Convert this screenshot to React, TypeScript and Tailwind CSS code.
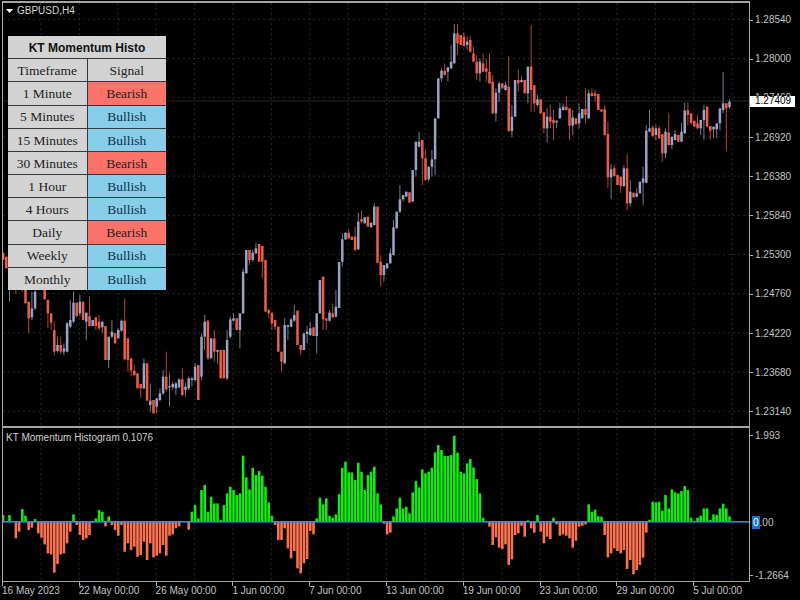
import React from "react";

type Row = number[];
const seg = (base: number, rows: Row[]) =>
  rows.map(([u, t, b, wt, wb]) => ({
    up: u === 1,
    t: base + t / 3,
    b: base + b / 3,
    wt: base + (wt ?? t) / 3,
    wb: base + (wb ?? b) / 3,
  }));

const candles = [
  ...seg(200, [[0,158,180],[0,170,205]]),
  ...seg(280, [
    [1,0,30,-10,65],[1,0,20],[0,0,30,-10,42],[1,0,20],[0,0,25,-10,35],
    [0,20,70],[0,65,115,65,160],[1,85,112,35,120],[1,35,85,30,90],[1,10,30],[0,10,30],
    [0,20,58],[0,60,100,60,145],[0,100,128,100,150],[0,150,215,125,225],[1,195,213,170,218],
    [0,195,215,170,222],[1,205,215,190,225],[1,130,215,125,218],[1,120,140,60,145],[1,68,125,35,130],
    [0,68,108,68,112],[1,65,100,45,110],[0,65,120],[1,98,125,98,180],[0,108,138,50,140],
    [1,120,138],[0,112,138,112,150],[0,125,145,105,150],[1,125,142,125,160],[0,138,240],
    [1,170,240,170,265],[1,155,170,120,175],[0,160,190],[1,150,175,145,175],[1,122,152,118,155],
    [0,122,238,55,242],[0,175,240,175,275],[0,235,272,235,288],[0,272,285,255,290],[0,280,325],
    [0,312,325,312,355],[1,250,325,235,328],[0,250,362],[1,362,375,310,395],[0,360,400],
    [1,355,380,355,400],[1,340,360,325,365],[1,290,340,270,345],[0,290,328,215,335],[1,318,322,280,380],
    [1,312,322,305,330],[1,310,325,305,345],[1,298,322,295,325],[0,298,345,265,348],[1,320,330,310,350],
    [1,295,325,290,330],[1,295,300,290,320],[1,260,300,250,305],[0,255,360],
  ]),
  ...seg(230, [
    [1,320,440,310,450],[1,275,320,255,360],[0,272,385,272,390],[1,325,385],[0,325,365,300,395],
    [1,360,365,360,400],[0,360,445],[0,360,445],[1,330,445,300,450],[1,268,320,260,325],
    [1,265,272,250,275],[0,265,300],[1,250,300,250,355],[1,125,250,115,252],[1,60,130],
    [0,60,90,60,105],[1,68,90,60,95],[1,55,70,40,72],[0,42,95],[0,48,95,48,145],
    [0,90,245],[0,240,250,237,265],[0,248,280,248,300],[0,270,290,270,300],[0,290,365],
    [0,365,395,365,425],[1,285,400,265,402],[1,285,290,285,330],[1,268,290,265,292],[1,255,272,225,275],
    [0,242,345],[0,345,360,345,375],[1,310,360],[1,305,312,288,340],[1,295,315,275,318],
    [0,292,318],[1,250,318,250,370],[1,150,250],[0,140,268,140,300],[0,265,272,265,300],
    [1,248,272,240,275],[0,250,262,220,265],[1,230,260,180,262],
  ]),
  ...seg(20, [
    [1,726,864],[1,658,725,640,740],[1,638,658,638,660],[0,638,655,630,657],[0,650,660],
    [0,650,690,620,695],[1,605,688,578,690],[0,597,605,572,610],[1,592,610],[0,590,620],
    [1,608,622],[1,560,615,550,617],[0,560,728],[0,725,765,705,800],[1,735,765,735,785],
    [1,730,745],[1,700,730,685,732],[1,622,705,600,707],[1,575,625],[1,538,575,495,580],
    [1,525,538,525,545],[1,515,530],[0,517,548],[1,450,545],[1,365,450,365,470],
    [1,365,380,335,382],[0,360,415,360,495],[0,415,480,390,482],[1,440,478,440,485],[1,418,440,390,470],
    [1,295,418,295,465],[1,175,295],[1,152,175,145,185],[0,152,165,130,167],[1,142,155,142,185],
    [1,125,145,75,147],[1,40,130,12,132],[0,40,70,12,105],[0,45,75],[0,50,78,35,80],
    [1,65,75,50,90],[0,60,95,48,97],[0,100,125,80,127],[0,125,160,105,180],[1,125,160,115,185],
    [0,130,155,100,157],[0,145,155,115,185],[0,155,190,100,192],[0,185,280,165,282],[1,218,280,205,305],
    [1,190,218,185,245],[0,190,205],[1,195,210,185,212],[0,200,333,110,335],[1,290,333,255,352],
    [1,180,290],[0,180,190,148,215],[1,180,186,170,188],[0,180,220],[1,140,220,140,250],
  ]),
  ...seg(60, [
    [0,20,90,-105,155],[0,75,130,75,155],[1,118,135,105,140],[0,118,160],[0,157,205,157,220],
    [1,170,205,145,248],[0,170,185,133,205],[0,180,190,150,240],[1,182,187,182,205],[1,145,175,128,177],
    [1,140,150,130,152],[0,140,150,108,152],[0,145,197,145,240],[1,172,197,150,225],[0,175,192,175,195],
    [1,160,190,130,205],[1,147,175],[0,147,165,85,190],[1,100,175,88,177],[0,100,108,85,110],
    [0,100,108,88,125],[0,102,150],[0,148,155],[0,148,225,135,227],[0,222,352,185,385],
    [1,328,352,312,418],[0,325,348,315,350],[0,345,375],[0,350,378,350,400],[1,325,378,315,380],
    [0,325,430,282,450],[1,395,430,360,440],[0,398,412],[1,400,410,385,412],[1,365,400],
    [1,355,368,320,435],[1,212,368,195,370],[1,205,215,150,217],[0,202,228,195,232],[1,205,225,195,240],
    [0,205,235,198,237],[0,222,280,222,305],[1,215,280,205,295],[0,218,255,160,257],[1,230,255,230,268],
    [1,222,240,210,242],[0,225,245],[1,215,245,188,247],[1,152,220,128,222],[0,150,165,128,195],
    [0,160,190],[0,182,200],[0,190,205,165,207],[1,180,205,180,225],[1,150,180,135,240],
    [0,140,200],[0,198,212,198,240],[1,200,208,200,235],[1,190,208,190,235],[1,145,190,145,212],
    [1,130,150,36,160],[0,130,145,130,272],[1,125,142,118,146],
  ]),
];

const histo = [
  20,0,20,0,-50,-30,38,18,-25,-18,8,-35,-48,-68,-95,-98,-153,-127,-98,-95,-65,-30,22,-10,-40,-55,-50,-40,-3,10,
  35,30,-14,16,-10,-25,-42,-10,-90,-65,-85,-75,-105,-100,-60,-115,-65,-107,-102,-95,-70,-102,-42,-38,-20,-14,0,0,-24,30,
  50,10,95,110,30,75,55,55,5,50,85,105,95,80,85,198,133,97,162,140,152,138,105,58,18,-10,-55,-55,-20,-80,
  -110,-88,-140,-155,-125,-112,-28,-38,10,72,52,70,18,12,22,83,162,180,148,148,125,177,150,95,140,150,165,85,52,-6,
  -38,-33,16,40,72,40,45,25,88,122,103,157,145,150,162,208,230,215,197,197,200,258,207,150,145,175,188,163,128,85,
  12,0,-15,-70,-47,-78,-82,-68,-130,-113,-40,-35,-12,-45,4,-20,-33,20,-30,-65,-45,-52,12,-8,-42,-38,-42,-50,-78,-57,
  -15,-12,-8,52,30,36,16,15,-40,-107,-95,-80,-88,-95,-85,-142,-115,-158,-145,-130,-108,-33,6,60,58,60,33,80,40,97,
  88,85,92,107,95,12,0,12,18,40,40,5,22,20,40,54,40,16,
];

const priceLabels = ["1.28540","1.28000","1.27460","1.26920","1.26380","1.25840","1.25300","1.24760","1.24220","1.23680","1.23140"];
const timeLabels = ["16 May 2023","22 May 00:00","26 May 00:00","1 Jun 00:00","7 Jun 00:00","13 Jun 00:00","19 Jun 00:00","23 Jun 00:00","29 Jun 00:00","5 Jul 00:00"];
const rows = [
  ["Timeframe","Signal",""],
  ["1 Minute","Bearish","r"],
  ["5 Minutes","Bullish","b"],
  ["15 Minutes","Bullish","b"],
  ["30 Minutes","Bearish","r"],
  ["1 Hour","Bullish","b"],
  ["4 Hours","Bullish","b"],
  ["Daily","Bearish","r"],
  ["Weekly","Bullish","b"],
  ["Monthly","Bullish","b"],
];
const vGrid = Array.from({ length: 20 }, (_, k) => 2.6 + 38.4 * k);
const hGrid = [19.3, 58.5, 97.7, 136.9, 176.1, 215.3, 254.5, 293.7, 332.9, 372.1, 411.3];
const X = (i: number) => 3.1 + 3.2 * i;

function AxisTick({ label }: { label: string }) {
  return (
    <div className="h-0 flex items-center">
      <span className="w-[3px] h-px bg-[#b0b0b0] mr-[2px]" />
      <span>{label}</span>
    </div>
  );
}

export default function App() {
  return (
    <div className="relative w-[800px] h-[600px] bg-black overflow-hidden pt-px pl-[2px] flex flex-col font-['Liberation_Sans',sans-serif] text-[10px] leading-none text-[#c4c4c4]">
      {/* price pane */}
      <div className="flex h-[425px] shrink-0">
        <div className="relative w-[748px] h-full border-t-2 border-x border-[#a6a6a6]">
          <svg className="block w-[746px] h-[423px] blur-[0.3px]" viewBox="3 3 746 423">
            {hGrid.map((y) => (
              <line key={y} x1="3" x2="749" y1={y} y2={y} stroke="#2a2a2a" strokeWidth="1" strokeDasharray="2 3" />
            ))}
            {vGrid.map((x) => (
              <line key={x} x1={x} x2={x} y1="3" y2="426" stroke="#2a2a2a" strokeWidth="1" strokeDasharray="2 3" />
            ))}
            <line x1="3" x2="749" y1="101" y2="101" stroke="#262626" strokeWidth="1" />
            {candles.map((c, i) => (
              <g key={i} fill={c.up ? "#9aa5c6" : "#f05e48"}>
                <rect x={X(i) - 0.5} y={c.wt} width="1" height={Math.max(c.wb - c.wt, 0.5)} opacity="0.75" />
                <rect x={X(i) - 1.25} y={c.t} width="2.5" height={Math.max(c.b - c.t, 1)} />
              </g>
            ))}
          </svg>
          <div className="absolute left-[3px] top-[3px] flex items-center gap-[4px] text-[#d4d4d4]">
            <svg width="7" height="4" viewBox="0 0 7 4"><path d="M0 0h7L3.5 4z" fill="#ffffff" /></svg>
            <span className="text-[10px]">GBPUSD,H4</span>
          </div>
          <div className="absolute left-[5px] top-[33px] w-[158px] h-[254px] grid grid-cols-2 grid-rows-[repeat(11,1fr)] gap-px bg-[#34383c] font-['Liberation_Serif',serif] text-[13.5px] text-[#222222]">
            <div className="col-span-2 bg-[#d3d3d3] flex items-center justify-center pt-px font-['Liberation_Sans',sans-serif] font-bold text-[12px] text-[#111111]">
              KT Momentum Histo
            </div>
            {rows.map(([a, b, k]) => (
              <React.Fragment key={a}>
                <div className="bg-[#d3d3d3] flex items-center justify-center pt-px">{a}</div>
                {k === "r" ? (
                  <div className="bg-[#fb7268] flex items-center justify-center pt-px">{b}</div>
                ) : k === "b" ? (
                  <div className="bg-[#87ceeb] flex items-center justify-center pt-px text-[#0f2f44]">{b}</div>
                ) : (
                  <div className="bg-[#d3d3d3] flex items-center justify-center pt-px">{b}</div>
                )}
              </React.Fragment>
            ))}
          </div>
        </div>
        <div className="relative flex-1 flex flex-col gap-[39.2px] pt-[19px]">
          {priceLabels.map((p) => (
            <AxisTick key={p} label={p} />
          ))}
          <div className="absolute left-0 top-[95px] w-[45px] h-[10.5px] bg-white text-black flex items-center pl-[5px]">1.27409</div>
        </div>
      </div>
      {/* separator */}
      <div className="h-[2px] w-[748px] bg-[#a6a6a6] shrink-0" />
      {/* indicator pane */}
      <div className="flex h-[154px] shrink-0">
        <div className="relative w-[748px] h-full border-x border-b border-[#a6a6a6]">
          <svg className="block w-[746px] h-[153px]" viewBox="3 428 746 153">
            {vGrid.map((x) => (
              <line key={x} x1={x} x2={x} y1="428" y2="581" stroke="#262626" strokeWidth="1" strokeDasharray="2 3" />
            ))}
            {histo.map((h, i) =>
              h === 0 ? null : (
                <rect
                  key={i}
                  x={X(i) - 1.3}
                  y={h > 0 ? 521.7 - h / 3 : 521.7}
                  width="2.6"
                  height={Math.abs(h) / 3}
                  fill={h > 0 ? "#12ea12" : "#fa724f"}
                />
              )
            )}
            <rect x="3" y="521" width="746" height="1.6" fill="#2b8ce6" />
          </svg>
          <span className="absolute left-[3px] top-[5px] text-[#d0d0d0]">KT Momentum Histogram 0.1076</span>
        </div>
        <div className="relative flex-1 flex flex-col pt-[7.7px]">
          <AxisTick label="1.993" />
          <div className="h-[87.3px]" />
          <div className="h-0 flex items-center pl-[2px]">
            <span className="bg-[#1f6fd0] text-white px-px h-[13px] flex items-center">0</span>
            <span>.00</span>
          </div>
          <div className="h-[53px]" />
          <AxisTick label="-1.2664" />
        </div>
      </div>
      {/* time axis */}
      <div className="flex flex-1">
        {timeLabels.map((t) => (
          <div key={t} className="w-[76.8px] shrink-0 flex flex-col items-start">
            <span className="w-px h-[4px] bg-[#b0b0b0]" />
            <span className="whitespace-nowrap">{t}</span>
          </div>
        ))}
      </div>
    </div>
  );
}
